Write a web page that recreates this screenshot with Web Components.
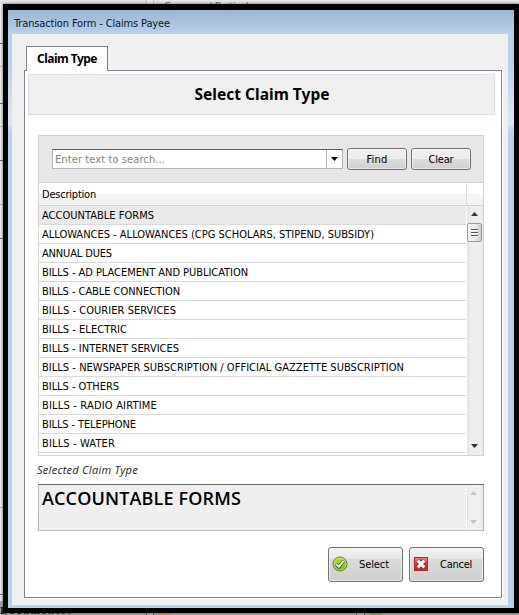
<!DOCTYPE html>
<html lang="en"><head><meta charset="utf-8"><title>Claims Payee</title>
<style>
html,body{margin:0;width:519px;height:615px;overflow:hidden;background:#eee}
body{font:11px/14px "DejaVu Sans Condensed","DejaVu Sans",sans-serif;color:#000}
</style></head><body>
<claim-app></claim-app>
<script>
const define=(name,html,after)=>{
  const t=document.createElement('template');t.innerHTML=html;
  customElements.define(name,class extends HTMLElement{
    connectedCallback(){
      if(this.shadowRoot)return;
      this.attachShadow({mode:'open'}).append(t.content.cloneNode(true));
      if(after)after(this,this.shadowRoot);
    }
  });
};
/* Text run whose tracking is tuned to a set width. */
define('fit-text',`<style>:host{display:inline-block;white-space:pre;flex:none}</style><slot></slot>`,el=>{
  const w=+el.getAttribute('w');
  const n=el.textContent.length;
  const now=el.getBoundingClientRect().width;
  if(w&&now)el.style.letterSpacing=((w-now)/n)+'px';
});
define('arrow-glyph',`<style>:host{display:block;width:7px;height:4px}:host([up]) svg{transform:scaleY(-1)}svg{display:block}</style>
<svg width="7" height="4" viewBox="0 0 7 4"><path d="M0 0H7L3.5 4Z" fill="currentColor"/></svg>`);
define('push-button',`<style>
:host{display:flex;flex:none;box-sizing:border-box;align-items:center;justify-content:center;border:1px solid #707070;border-radius:3px;
background:linear-gradient(#f2f2f2,#ebebeb 48%,#dcdcdc 52%,#cfcfcf);box-shadow:inset 0 0 0 1px #f7f7f7aa;width:60px;height:22px;padding-top:1px}
:host([large]){width:75px;height:35px;justify-content:flex-start;padding-left:3px;background:linear-gradient(#f2f2f2,#e9e9e9 31%,#dadada 33%,#cfcfcf)}
::slotted(svg){flex:none;margin-top:-2px}
</style><slot></slot>`);
define('search-bar',`<style>
:host{display:flex;box-sizing:border-box;height:47px;padding:12px 12px 0 13px;background:#e7e7e7;border-bottom:1px solid #d2d2d2;gap:4px}
.box{display:flex;flex:none;margin-top:1px;box-sizing:border-box;width:291px;height:20px;background:#fff;border:1px solid #b4b4b4;border-top-color:#5c5c5c}
.hint{flex:1;padding:3px 0 0 2px;color:#858585}
.drop{width:15px;border-left:1px solid #b4b4b4;display:flex;align-items:center;justify-content:center}
</style>
<div class="box"><div class="hint"><fit-text w="110">Enter text to search...</fit-text></div><div class="drop"><arrow-glyph></arrow-glyph></div></div>
<push-button><fit-text w="21">Find</fit-text></push-button><push-button><fit-text w="25">Clear</fit-text></push-button>`);
define('scroll-track',`<style>
:host{display:flex;box-sizing:border-box;width:17px;flex-direction:column;justify-content:space-between;align-items:center;padding:6px 2px 7px 1px;
background:linear-gradient(90deg,#e3e3e3,#ededed 25%,#efefef 80%,#e6e6e6);border-left:1px solid #fff;color:#333}
:host([off]){color:#c3c3c3;padding:6px 5px 6px 2px;background:#f0f0f0;box-shadow:inset 1px 0 #e2e2e2,inset -2px 0 #e8e8e8}
.top{display:flex;flex-direction:column;align-items:center;gap:7px}
:host([off]) .thumb{display:none}
.thumb{box-sizing:border-box;width:15px;height:19px;border:1px solid #999;border-radius:2px;background:linear-gradient(90deg,#f5f5f5,#e9e9e9 50%,#cfcfcf);
display:flex;flex-direction:column;align-items:center;justify-content:center;gap:1px}
.thumb i{width:7px;height:1px;background:#555;border-bottom:1px solid #fff}
</style><div class="top"><arrow-glyph up></arrow-glyph><div class="thumb"><i></i><i></i><i></i></div></div><arrow-glyph></arrow-glyph>`);
define('list-row',`<style>
:host{display:block;box-sizing:border-box;height:19px;padding:3px 0 0 3px;border-bottom:1px solid #dadada}
:host([selected]){background:#eaeaea}
</style><slot></slot>`);
define('claim-grid',`<style>
:host{display:block;box-sizing:border-box;width:446px;height:321px;border:1px solid #d2d2d2;background:#fff}
.head{display:flex;box-sizing:border-box;height:23px;border-bottom:1px solid #d2d2d2;background:linear-gradient(#fff 45%,#f5f6f8 50%,#f0f2f4)}
.head div{box-sizing:border-box;width:428px;padding:5px 0 0 3px;border-right:1px solid #dadada}
.body{display:flex;height:249px}
.rows{width:427px}
</style>
<search-bar></search-bar>
<div class="head"><div><fit-text w="54">Description</fit-text></div></div>
<div class="body"><div class="rows"></div><scroll-track></scroll-track></div>`,(el,root)=>{
  const rows=[['ACCOUNTABLE FORMS',112],['ALLOWANCES - ALLOWANCES (CPG SCHOLARS, STIPEND, SUBSIDY)',332],['ANNUAL DUES',70],
  ['BILLS - AD PLACEMENT AND PUBLICATION',206],['BILLS - CABLE CONNECTION',138],['BILLS - COURIER SERVICES',134],['BILLS - ELECTRIC',85],
  ['BILLS - INTERNET SERVICES',137],['BILLS - NEWSPAPER SUBSCRIPTION / OFFICIAL GAZZETTE SUBSCRIPTION',362],['BILLS - OTHERS',77],
  ['BILLS - RADIO AIRTIME',115],['BILLS - TELEPHONE',94],['BILLS - WATER',73]];
  root.querySelector('.rows').innerHTML=rows.map(([t,w],i)=>`<list-row${i?'':' selected'}><fit-text w="${w}">${t}</fit-text></list-row>`).join('');
});
define('memo-box',`<style>
:host{display:flex;box-sizing:border-box;width:446px;height:47px;border:1px solid #b9b9bd;border-top-color:#666;background:#efefef;justify-content:space-between}
.t{font:600 18px/26px "Open Sans","Noto Sans",sans-serif;padding-left:3px}
</style><div class="t"><slot></slot></div><scroll-track off></scroll-track>`);
define('tab-panel',`<style>
:host{display:block;padding:12px 0 0 12px}
.tab{position:relative;z-index:1;box-sizing:border-box;width:82px;height:25px;margin:0 0 -1px 2px;border:1px solid #83838f;border-bottom:0;background:#fff;padding:3px 0 0 10px;font:bold 12px/18px "Noto Sans",sans-serif}
.page{box-sizing:border-box;width:478px;height:528px;border:1px solid #83838f;background:#fff;padding:3px 0 0 3px;box-shadow:1px 1px #fff}
.title{box-sizing:border-box;width:467px;height:41px;border:1px solid #d5dfe9;background:#f0f0f0;font:bold 15.5px/38px "Noto Sans",sans-serif;text-align:center;padding-left:1px}
.content{padding:20px 0 0 10px}
.label{font:italic 400 11px/15px "Open Sans","Noto Sans",sans-serif;color:#222;height:28px;box-sizing:border-box;padding-top:6px;margin-left:-1px}
.actions{display:flex;gap:6px;justify-content:flex-end;width:446px;padding-top:16px}
.actions fit-text{margin-left:11px}
</style>
<div class="tab"><fit-text w="60">Claim Type</fit-text></div>
<div class="page"><div class="title"><fit-text w="135">Select Claim Type</fit-text></div>
<div class="content"><claim-grid></claim-grid>
<div class="label"><fit-text w="101">Selected Claim Type</fit-text></div>
<memo-box><fit-text w="199">ACCOUNTABLE FORMS</fit-text></memo-box>
<div class="actions">
<push-button large><svg width="16" height="16" viewBox="0 0 16 16"><defs><linearGradient id="g" x2="0" y2="1"><stop stop-color="#b9df55"/><stop offset="1" stop-color="#70b71a"/></linearGradient></defs><circle cx="8" cy="8" r="7" fill="url(#g)" stroke="#55802a"/><circle cx="8" cy="8" r="6" fill="none" stroke="#d0eb80" stroke-opacity=".6"/><path d="M4.2 8.3L7 11L11.6 4.8" fill="none" stroke="#466b2c" stroke-width="3.4" stroke-linejoin="round"/><path d="M4.4 8.4L7 10.7L11.4 5" fill="none" stroke="#f7fff0" stroke-width="1.8"/></svg><fit-text w="30">Select</fit-text></push-button>
<push-button large><svg width="16" height="16" viewBox="0 0 16 16"><defs><linearGradient id="r" x2="0" y2="1"><stop stop-color="#e98a83"/><stop offset=".5" stop-color="#cf3a3a"/><stop offset="1" stop-color="#c92528"/></linearGradient></defs><rect x="1.5" y="1.5" width="13" height="13" fill="url(#r)" stroke="#a82a2c"/><path d="M4.7 4.7L11.3 11.3M11.3 4.7L4.7 11.3" stroke="#8f2029" stroke-width="4.8"/><path d="M4.7 4.7L11.3 11.3M11.3 4.7L4.7 11.3" stroke="#f2f4ff" stroke-width="3.2"/></svg><fit-text w="32">Cancel</fit-text></push-button>
</div></div></div>`);
define('dialog-window',`<style>
:host{display:block;box-sizing:border-box;width:516px;height:609px;border:5px solid #000;border-top-width:6px;
background:linear-gradient(#9bb6d2,#b9d1ea 24px,#b9d1ea 55px,#dde8f6 113px,#b9d1ea 121px);padding:0 6px 3px 4px;box-shadow:0 0 3px #555}
.caption{height:24px;box-sizing:border-box;padding:7px 0 0 2px;color:#101428}
.client{height:571px;background:#f0f0f0}
</style><div class="caption"><fit-text w="156">Transaction Form - Claims Payee</fit-text></div><div class="client"><tab-panel></tab-panel></div>`);
/* Form lying behind the dialog; only its edges stay in view. */
define('back-form',`<style>
:host{display:grid;width:519px;height:615px;grid-template-rows:4px 1fr 14px;overflow:hidden;background:
linear-gradient(#666,#666) 0 43px/3px 1px no-repeat,linear-gradient(#bbb,#bbb) 0 66px/3px 1px no-repeat,
linear-gradient(#666,#666) 0 103px/3px 1px no-repeat,linear-gradient(#bbb,#bbb) 0 126px/3px 1px no-repeat,
linear-gradient(#666,#666) 0 160px/3px 1px no-repeat,linear-gradient(#bbb,#bbb) 0 204px/3px 1px no-repeat,
linear-gradient(#666,#666) 0 238px/3px 1px no-repeat,linear-gradient(#bbb,#bbb) 0 507px/3px 1px no-repeat,
linear-gradient(#666,#666) 0 594px/3px 1px no-repeat,#f0f0f0}
.top{background:linear-gradient(90deg,#e6e6e6 146px,#bbb 146px 147px,#eee 147px 153px,#bbb 153px 154px,#e8e8e8 154px);padding-left:164px;color:#3d5a92}
.bottom{display:grid;grid-template-columns:146px 83px 168px 1fr;height:20px;line-height:18px;white-space:nowrap;background:
linear-gradient(#d39a36,#d39a36) 159px 0/12px 14px no-repeat,linear-gradient(#86ad35,#86ad35) 370px 0/13px 14px no-repeat,
linear-gradient(90deg,#aaa 146px,#444 146px 147px,#bbb 147px 153px,#444 153px 154px,#aaa 154px 356px,#444 356px 357px,#bbb 357px 364px,#444 364px 365px,#aaa 365px)}
b{font-family:"Liberation Serif",serif}
</style><div class="top"><fit-text w="98">Command Particulars</fit-text></div><div></div>
<div class="bottom"><b><fit-text w="74">Documents?</fit-text></b><span></span><fit-text w="70">Save for Later</fit-text><fit-text w="121">Refer from Past Transac</fit-text></div>`);
define('claim-app',`<style>
:host{display:grid;width:519px;height:615px;overflow:hidden}
back-form,dialog-window{grid-area:1/1}
dialog-window{margin:4px 0 0 3px}
</style><back-form></back-form><dialog-window></dialog-window>`);
</script></body></html>
